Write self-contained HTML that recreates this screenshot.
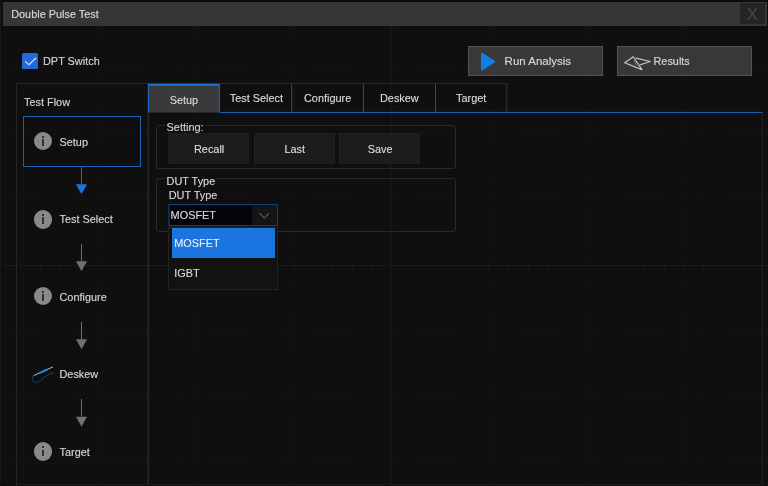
<!DOCTYPE html>
<html>
<head>
<meta charset="utf-8">
<title>Double Pulse Test</title>
<style>
html,body{margin:0;padding:0;}
body{width:768px;height:486px;background:#0f0f0f;overflow:hidden;position:relative;
 font-family:"Liberation Sans",sans-serif;font-size:10.9px;line-height:12px;color:#d2d2d2;}
#wrap{position:absolute;left:0;top:0;width:768px;height:486px;will-change:transform;}
.abs{position:absolute;box-sizing:border-box;}
.t{position:absolute;white-space:nowrap;line-height:12px;text-shadow:0 0 0.7px rgba(200,200,200,0.55);}
#bgsvg{position:absolute;left:0;top:0;}
#title{left:3px;top:1.5px;width:763.5px;height:24.5px;background:#363636;}
#close{left:740px;top:3px;width:25px;height:21px;background:#242424;color:#454545;
 font-size:17px;line-height:23px;text-align:center;}
#chk{left:21.75px;top:53px;width:16.25px;height:16.25px;background:#2469dc;border-radius:1.5px;}
.btn{background:#383838;border:1px solid #545454;}
#run{left:468px;top:46px;width:135px;height:30px;}
#results{left:617px;top:46px;width:135px;height:30px;}
#step1{left:23px;top:116px;width:118px;height:51px;border:1px solid #1b62b8;}
.ic{position:absolute;width:18.5px;height:18.5px;border-radius:50%;background:#898989;left:33.6px;}
.ic i{position:absolute;left:8.45px;width:1.6px;background:#303030;}
.ic i.d{top:3.8px;height:2px;}
.ic i.s{top:7.2px;height:6.8px;}
.tab{top:83.5px;height:29px;border:1px solid #3c3c3c;border-bottom:none;text-align:center;}
#tabline{left:148px;top:112px;width:614px;height:1px;background:#1b5cb0;}
#tab1{left:148px;top:83.5px;width:72px;height:29px;background:#3a3a3a;border:1px solid #1b62b8;border-top:2px solid #1b6fd0;border-bottom:none;}
.group{border:1px solid #292929;border-radius:3px;}
.glabel{background:#0f0f0f;padding:0 2px;}
.sbtn{background:#1c1c1c;border:1px solid #1f1f1f;top:133px;width:81px;height:31px;}
</style>
</head>
<body>
<div id="wrap">
<svg id="bgsvg" width="768" height="486" viewBox="0 0 768 486">
 <g stroke="#191919" stroke-width="1" stroke-dasharray="1 1.6" fill="none">
  <path d="M98.5 0V486M196.5 0V486M294.5 0V486M488.5 0V486M586.5 0V486M684.5 0V486"/>
  <path d="M0 67.5H768M0 133.5H768M0 199.5H768M0 331.5H768M0 397.5H768M0 463.5H768"/>
 </g>
 <g stroke="#1c1c1c" stroke-width="1" fill="none">
  <path d="M0 265.5H768"/>
  <path d="M20.5 263V268M40.5 263V268M60.5 263V268M79.5 263V268M98.5 263V268M118.5 263V268M138.5 263V268M157.5 263V268M176.5 263V268M196.5 263V268M216.5 263V268M235.5 263V268M254.5 263V268M274.5 263V268M294.5 263V268M313.5 263V268M332.5 263V268M352.5 263V268M372.5 263V268M391.5 263V268M410.5 263V268M430.5 263V268M450.5 263V268M469.5 263V268M488.5 263V268M508.5 263V268M528.5 263V268M547.5 263V268M566.5 263V268M586.5 263V268M606.5 263V268M625.5 263V268M644.5 263V268M664.5 263V268M684.5 263V268M703.5 263V268M722.5 263V268M742.5 263V268M762.5 263V268"/>
  <path d="M389.5 27.5H393M389.5 40.5H393M389.5 54.5H393M389.5 67.5H393M389.5 80.5H393M389.5 93.5H393M389.5 106.5H393M389.5 120.5H393M389.5 133.5H393M389.5 146.5H393M389.5 159.5H393M389.5 172.5H393M389.5 186.5H393M389.5 199.5H393M389.5 212.5H393M389.5 225.5H393M389.5 238.5H393M389.5 252.5H393M389.5 265.5H393M389.5 278.5H393M389.5 291.5H393M389.5 304.5H393M389.5 318.5H393M389.5 331.5H393M389.5 344.5H393M389.5 357.5H393M389.5 370.5H393M389.5 384.5H393M389.5 397.5H393M389.5 410.5H393M389.5 423.5H393M389.5 436.5H393M389.5 450.5H393M389.5 463.5H393M389.5 476.5H393" stroke="#191919"/>
 </g>
 <rect x="390" y="0" width="2" height="486" fill="#151515"/>
 <path d="M20 430.5h1M40 430.5h1M60 430.5h1M79 430.5h1M118 430.5h1M138 430.5h1M157 430.5h1M176 430.5h1M216 430.5h1M235 430.5h1M254 430.5h1M274 430.5h1M313 430.5h1M332 430.5h1M352 430.5h1M372 430.5h1M410 430.5h1M430 430.5h1M450 430.5h1M469 430.5h1M508 430.5h1M528 430.5h1M547 430.5h1M566 430.5h1M606 430.5h1M625 430.5h1M644 430.5h1M664 430.5h1M703 430.5h1M722 430.5h1M742 430.5h1M762 430.5h1" stroke="#1a1a1a" stroke-width="1" fill="none"/>
 <rect x="0" y="0" width="3" height="486" fill="#0b0b0b"/>
 <rect x="0" y="0" width="1.5" height="486" fill="#161616"/>
 <rect x="0" y="0" width="768" height="1.5" fill="#0b0b0b"/>
 <rect x="766.5" y="0" width="1.5" height="27" fill="#0b0b0b"/>
 <rect x="16" y="484" width="747" height="1.2" fill="#1b1b1b"/>
 <rect x="0" y="485.2" width="768" height="0.8" fill="#0d0d0d"/>
 <!-- flow panel borders -->
 <path d="M16.5 486V83.5H148" stroke="#262626" stroke-width="1" fill="none"/>
 <rect x="147.5" y="84" width="1.5" height="400" fill="#2a2a2a"/>
 <rect x="761.6" y="112" width="1.5" height="373" fill="#1e1e1e"/>
</svg>

<div class="abs" id="title"></div>
<span class="t" style="left:11.2px;top:8.3px;color:#d6d6d6;">Double Pulse Test</span>
<div class="abs" id="close">X</div>

<div class="abs" id="chk"><svg width="16.25" height="16.25" viewBox="0 0 16.25 16.25" style="position:absolute;left:0;top:0"><path d="M3.3 8.4 L6.9 11.8 L13.9 5" fill="none" stroke="#e4eaf6" stroke-width="1.15"/></svg></div>
<span class="t" style="left:43px;top:54.9px;">DPT Switch</span>

<div class="abs btn" id="run"></div>
<svg class="abs" style="left:480px;top:51px" width="17" height="21" viewBox="0 0 17 21"><path d="M1.8 2.3 L14.6 10.6 L1.8 18.9 Z" fill="#0d80e4" stroke="#0d80e4" stroke-width="1.6" stroke-linejoin="round"/></svg>
<span class="t" style="left:504.6px;top:54.6px;font-size:11.5px;color:#d6d6d6;">Run Analysis</span>
<div class="abs btn" id="results"></div>
<svg class="abs" style="left:620.5px;top:52.5px" width="32" height="20" viewBox="0 0 32 20"><g fill="none" stroke="#c8c8c8" stroke-width="1.15" stroke-linejoin="round" stroke-linecap="round"><path d="M3.7 9.8 L12.3 3.8 L20.9 16.6 Z"/><path d="M15.2 5.1 L29.2 8.5 L19.4 11.7"/><path d="M13.2 8.2 L15.4 11.8" stroke-width="0.7" stroke="#999"/></g></svg>
<span class="t" style="left:653.5px;top:55.1px;color:#d6d6d6;">Results</span>

<span class="t" style="left:24px;top:95.8px;">Test Flow</span>
<div class="abs" id="step1"></div>

<div class="ic" style="top:131.8px"><i class="d"></i><i class="s"></i></div>
<span class="t" style="left:59.5px;top:136.3px;">Setup</span>
<div class="ic" style="top:210px"><i class="d"></i><i class="s"></i></div>
<span class="t" style="left:59.5px;top:213.1px;">Test Select</span>
<div class="ic" style="top:286.9px"><i class="d"></i><i class="s"></i></div>
<span class="t" style="left:59.5px;top:291.2px;">Configure</span>
<svg class="abs" style="left:30px;top:364px" width="26" height="22" viewBox="0 0 26 22">
 <path d="M3.6 11.6 C2 13 1.6 16 3.4 17.6 C6 19.6 10 17.4 13 14.6 C16 11.8 20 9.2 23.6 8.8" fill="none" stroke="#15437a" stroke-width="1"/>
 <path d="M3.6 11.6 L23 2.9" stroke="#c8c8c8" stroke-width="0.9" fill="none"/>
 <path d="M9.2 9.1 L17.2 5.5" stroke="#1a86ea" stroke-width="2.1" fill="none"/>
</svg>
<span class="t" style="left:59.5px;top:368.4px;">Deskew</span>
<div class="ic" style="top:442.4px"><i class="d"></i><i class="s"></i></div>
<span class="t" style="left:59.5px;top:446.1px;">Target</span>

<svg class="abs" style="left:70px;top:160px" width="24" height="280" viewBox="0 0 24 280">
 <path d="M11.5 7V24.5" stroke="#1b6fd0" stroke-width="1"/>
 <path d="M6 24.3H17L11.5 34.2Z" fill="#1b74d8"/>
 <g stroke="#707070" stroke-width="1"><path d="M11.5 84V101.5M11.5 162V179.5M11.5 239V256.5"/></g>
 <g fill="#707070"><path d="M6 101.3H17L11.5 111.2Z"/><path d="M6 179.3H17L11.5 189.2Z"/><path d="M6 256.8H17L11.5 266.7Z"/></g>
</svg>

<svg class="abs" style="left:140px;top:80px" width="628" height="36" viewBox="140 80 628 36">
 <path d="M220 83.5H507" stroke="#2b2b2b" stroke-width="1" fill="none"/>
 <path d="M291.7 84V112M363.4 84V112M435.5 84V112" stroke="#4a4a4a" stroke-width="1" fill="none"/>
 <path d="M506.8 84V112" stroke="#363636" stroke-width="1" fill="none"/>
 <rect x="219.5" y="111.9" width="543" height="1.1" fill="#1a5cb0"/>
 <rect x="148" y="83.6" width="71.8" height="28.9" fill="#3a3a3a"/>
 <path d="M148.5 112.5V84.6H219.3V112.5" stroke="#1b66c4" stroke-width="1" fill="none"/>
 <rect x="148" y="83.6" width="71.8" height="2.2" fill="#1b6fd2"/>
</svg>
<span class="t" style="left:169.7px;top:93.5px;color:#d6d6d6;">Setup</span>
<span class="t" style="left:229.7px;top:92.3px;color:#d6d6d6;">Test Select</span>
<span class="t" style="left:304px;top:92.3px;color:#d6d6d6;">Configure</span>
<span class="t" style="left:380px;top:92.3px;color:#d6d6d6;">Deskew</span>
<span class="t" style="left:456px;top:92.3px;color:#d6d6d6;">Target</span>

<div class="abs group" style="left:156px;top:125px;width:299.5px;height:44px;"></div>
<span class="t glabel" style="left:164.6px;top:120.8px;">Setting:</span>
<div class="abs sbtn" style="left:168px;"></div>
<div class="abs sbtn" style="left:254px;"></div>
<div class="abs sbtn" style="left:339px;"></div>
<span class="t" style="left:194px;top:143.2px;color:#d6d6d6;">Recall</span>
<span class="t" style="left:284.5px;top:143.2px;color:#d6d6d6;">Last</span>
<span class="t" style="left:367.8px;top:143.2px;color:#d6d6d6;">Save</span>

<div class="abs group" style="left:156px;top:178px;width:299.5px;height:54px;"></div>
<span class="t glabel" style="left:164.6px;top:175px;">DUT Type</span>
<span class="t" style="left:168.75px;top:189.3px;">DUT Type</span>

<svg class="abs" style="left:160px;top:200px" width="125" height="30" viewBox="0 0 125 30"><rect x="9" y="4.6" width="108.3" height="21" fill="#030308" stroke="#164a90" stroke-width="1"/><rect x="92" y="5.1" width="24.8" height="20" fill="#141414"/></svg>
<svg class="abs" style="left:256px;top:210px" width="16" height="11" viewBox="0 0 16 11"><path d="M3.6 3.2 L8.3 8.1 L13 3.2" fill="none" stroke="#555" stroke-width="1.25"/></svg>
<span class="t" style="left:170.6px;top:209px;color:#d6d6d6;">MOSFET</span>

<div class="abs" style="left:168px;top:227px;width:110px;height:63px;background:#121212;border:1px solid #232323;"></div>
<div class="abs" style="left:171.6px;top:228px;width:103.2px;height:30px;background:#1b75e0;"></div>
<span class="t" style="left:174.3px;top:236.7px;color:#e6eefc;">MOSFET</span>
<span class="t" style="left:174.3px;top:266.9px;color:#d6d6d6;">IGBT</span>
</div>
</body>
</html>
